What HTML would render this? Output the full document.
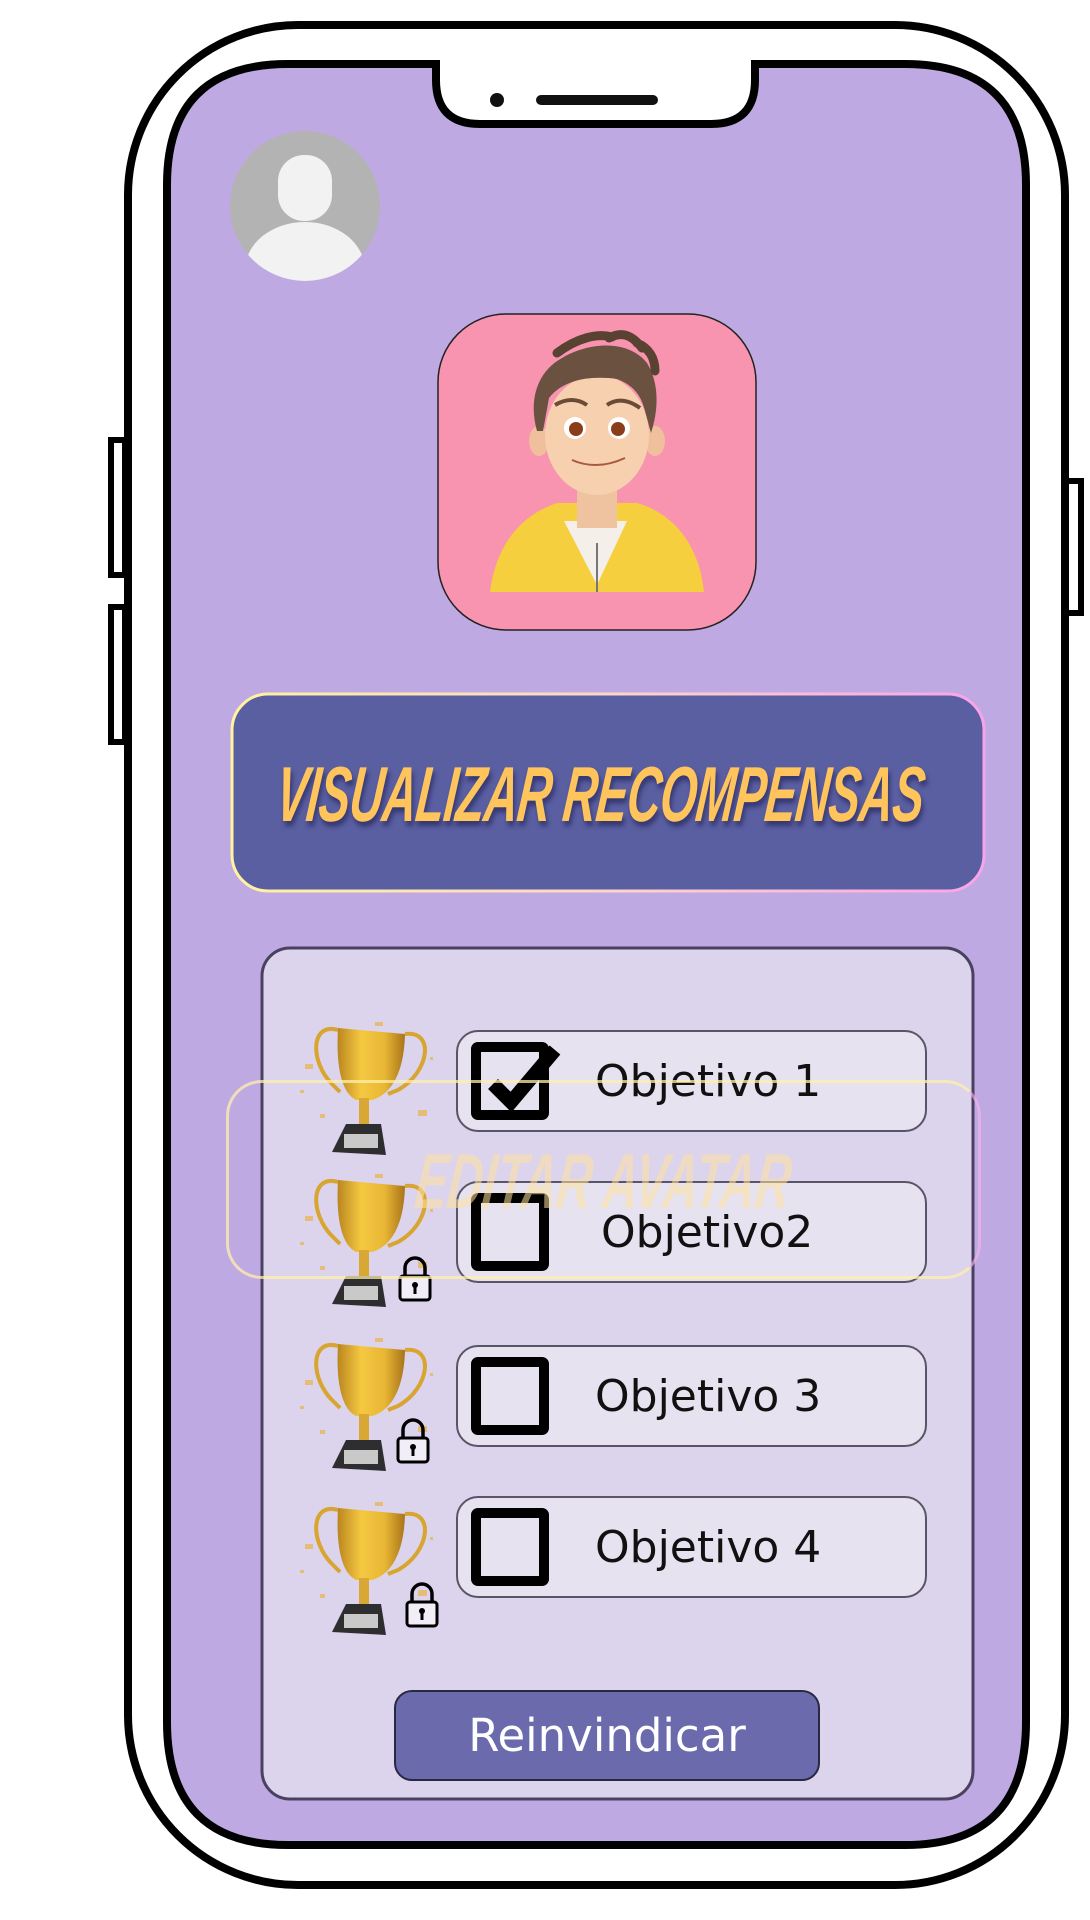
<!DOCTYPE html>
<html><head><meta charset="utf-8"><style>
html,body{margin:0;padding:0;background:#fff;}
body{width:1090px;height:1920px;position:relative;overflow:hidden;font-family:"Liberation Sans","DejaVu Sans",sans-serif;}
.abs{position:absolute;}
.row{position:absolute;left:456px;width:471px;height:102px;box-sizing:border-box;background:#e6e2f0;border:2px solid #5a5566;border-radius:22px;}
.cb{position:absolute;left:13px;top:10px;width:78px;height:78px;box-sizing:border-box;border:10px solid #000;border-radius:7px;}
.lbl{position:absolute;top:0;line-height:100px;font-family:"DejaVu Sans","Liberation Sans",sans-serif;font-size:44px;color:#111;}
</style></head><body>
<svg class="abs" style="left:0;top:0" width="1090" height="1920">
  <rect x="111" y="440" width="14" height="135" fill="#fff" stroke="#000" stroke-width="6"/>
  <rect x="111" y="607" width="14" height="135" fill="#fff" stroke="#000" stroke-width="6"/>
  <rect x="1066" y="481" width="15" height="132" fill="#fff" stroke="#000" stroke-width="6"/>
  <rect x="128" y="25" width="937" height="1860" rx="170" fill="#fff" stroke="#000" stroke-width="8"/>
  <path d="M288,64 H436 V80 Q436,124 480,124 H711 Q755,124 755,80 V64 H905 Q1026,64 1026,185 V1722 Q1026,1845 905,1845 H288 Q167,1845 167,1722 V185 Q167,64 288,64 Z" fill="#bea9e2" stroke="#000" stroke-width="8"/>
  <circle cx="497" cy="100" r="7" fill="#111"/>
  <rect x="536" y="95" width="122" height="10" rx="5" fill="#111"/>
  <circle cx="305" cy="206" r="75" fill="#b3b3b3"/>
  <clipPath id="pc"><circle cx="305" cy="206" r="75"/></clipPath>
  <g clip-path="url(#pc)" fill="#f2f2f2">
    <rect x="278" y="155" width="54" height="66" rx="26"/>
    <ellipse cx="305" cy="270" rx="60" ry="48"/>
  </g>
  <defs>
    <linearGradient id="bg1" x1="0" x2="1"><stop offset="0" stop-color="#fff2a0"/><stop offset="0.5" stop-color="#fcd6c8"/><stop offset="1" stop-color="#f9a4e8"/></linearGradient>
    <linearGradient id="gold" x1="0" x2="1"><stop offset="0" stop-color="#b9861e"/><stop offset="0.35" stop-color="#f5c842"/><stop offset="0.7" stop-color="#e8b634"/><stop offset="1" stop-color="#a8741a"/></linearGradient>
    <g id="tro">
      <path d="M58,28 C30,20 30,60 52,82 L60,90" fill="none" stroke="#d8a530" stroke-width="4"/>
      <path d="M125,32 C155,28 150,70 118,88 L108,92" fill="none" stroke="#d8a530" stroke-width="4"/>
      <path d="M58,26 L125,32 C124,70 112,92 92,98 L76,98 C60,90 56,60 58,26 Z" fill="url(#gold)"/>
      <rect x="79" y="96" width="10" height="28" fill="#d9a733"/>
      <path d="M66,122 L101,122 L106,153 L52,150 Z" fill="#2e2e30"/>
      <rect x="64" y="132" width="34" height="14" fill="#c9c9c9"/>
      <g fill="#e9b85a" opacity="0.8"><rect x="25" y="62" width="8" height="5"/><rect x="138" y="108" width="9" height="6"/><rect x="20" y="88" width="4" height="3"/><rect x="150" y="55" width="3" height="3"/><rect x="40" y="112" width="5" height="4"/><rect x="95" y="20" width="8" height="4"/></g>
    </g>
    <g id="lock">
      <path d="M7,20 V12 A10,10 0 0 1 27,12 V20" fill="none" stroke="#000" stroke-width="3.5"/>
      <rect x="2" y="20" width="30" height="24" rx="3" fill="#f2eef8" stroke="#000" stroke-width="3"/>
      <circle cx="17" cy="29" r="3" fill="#000"/><rect x="15.5" y="30" width="3" height="8" fill="#000"/>
    </g>
  </defs>
  <rect x="438" y="314" width="318" height="316" rx="68" fill="#f893b0" stroke="#222" stroke-width="1.5"/>
  <g transform="translate(437,313)">
    <path d="M53,279 C60,225 90,200 120,190 L200,190 C235,200 262,230 267,279 Z" fill="#f6cf3e"/>
    <path d="M127,208 L160,272 L190,208 Z" fill="#f4efe8"/>
    <path d="M160,230 V279" stroke="#777" stroke-width="2"/>
    <rect x="140" y="165" width="40" height="50" fill="#f0c3a0"/>
    <ellipse cx="102" cy="128" rx="10" ry="15" fill="#f0c09c"/>
    <ellipse cx="218" cy="128" rx="10" ry="15" fill="#f0c09c"/>
    <ellipse cx="160" cy="122" rx="52" ry="60" fill="#f7d0b0"/>
    <path d="M100,118 C92,90 98,60 125,45 C150,30 190,25 210,50 C222,70 222,95 214,120 L208,98 C204,82 196,72 180,66 C150,62 125,68 112,85 L106,118 Z" fill="#6b5140"/>
    <path d="M120,40 C140,25 160,20 175,24 M172,25 C185,18 195,22 205,35 M200,30 C212,35 218,45 218,58" fill="none" stroke="#5a4232" stroke-width="9" stroke-linecap="round"/>
    <circle cx="138" cy="115" r="11" fill="#fff"/><circle cx="182" cy="115" r="11" fill="#fff"/>
    <circle cx="139" cy="116" r="7" fill="#8a3d1a"/><circle cx="181" cy="116" r="7" fill="#8a3d1a"/>
    <path d="M118,92 Q135,82 150,92 M170,92 Q185,82 203,95" fill="none" stroke="#6b4a36" stroke-width="4"/>
    <path d="M135,147 Q160,158 188,145" fill="none" stroke="#a65a40" stroke-width="2"/>
  </g>
  <rect x="232" y="694" width="752" height="197" rx="36" fill="#5a5fa2" stroke="url(#bg1)" stroke-width="3"/>
  <rect x="262" y="948" width="711" height="851" rx="28" fill="#dcd3ec" stroke="#4a4060" stroke-width="3"/>
  <use href="#tro" x="280" y="1002"/>
  <use href="#tro" x="280" y="1154"/>
  <use href="#tro" x="280" y="1318"/>
  <use href="#tro" x="280" y="1482"/>
  <use href="#lock" x="398" y="1256"/>
  <use href="#lock" x="396" y="1418"/>
  <use href="#lock" x="405" y="1582"/>
</svg>
<div class="abs" style="left:232px;top:696px;width:752px;height:197px;line-height:197px;text-align:center;">
  <span style="display:inline-block;transform:scaleX(0.6) skewX(-10deg);font-weight:bold;font-style:italic;font-size:78px;color:#ffc55c;white-space:nowrap;text-shadow:4px 5px 6px rgba(30,30,80,0.6);margin-left:-300px;margin-right:-300px;position:relative;left:-8px;letter-spacing:-1px">VISUALIZAR RECOMPENSAS</span>
</div>
<div class="row" style="top:1030px"><div class="cb"></div>
<svg class="abs" style="left:13px;top:2px" width="100" height="90"><path d="M22,50 L40,68 L84,16" fill="none" stroke="#000" stroke-width="14"/></svg>
<div class="lbl" style="left:137px">Objetivo 1</div></div>
<div class="row" style="top:1181px"><div class="cb"></div><div class="lbl" style="left:143px">Objetivo2</div></div>
<div class="row" style="top:1345px"><div class="cb"></div><div class="lbl" style="left:137px">Objetivo 3</div></div>
<div class="row" style="top:1496px"><div class="cb"></div><div class="lbl" style="left:137px">Objetivo 4</div></div>
<div class="abs" style="left:226px;top:1080px;width:755px;height:199px;box-sizing:border-box;border:3px solid rgba(255,240,170,0.75);border-right-color:rgba(250,180,235,0.6);border-radius:36px;"></div>
<div class="abs" style="left:226px;top:1082px;width:755px;height:199px;line-height:199px;text-align:center;">
  <span style="display:inline-block;transform:scaleX(0.62) skewX(-10deg);font-weight:bold;font-style:italic;font-size:78px;color:rgba(255,225,160,0.55);white-space:nowrap;margin-left:-150px;margin-right:-150px;">EDITAR AVATAR</span>
</div>
<div class="abs" style="left:394px;top:1690px;width:426px;height:91px;box-sizing:border-box;background:#6a6aad;border:2px solid #2a2840;border-radius:18px;text-align:center;line-height:87px;color:#fff;font-family:'DejaVu Sans','Liberation Sans',sans-serif;font-size:45px;">Reinvindicar</div>
</body></html>
